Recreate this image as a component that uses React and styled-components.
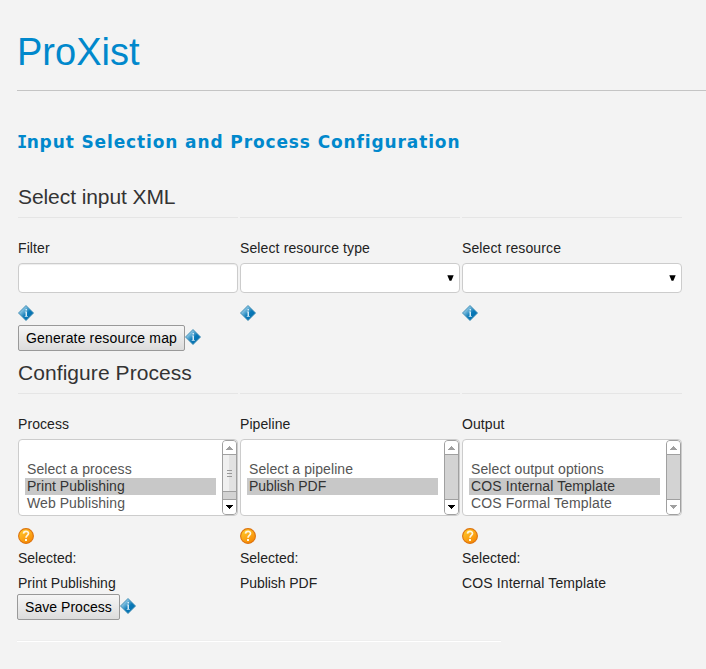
import React from "react";
import styled, { createGlobalStyle } from "styled-components";

const GlobalStyle = createGlobalStyle`
  * { box-sizing: border-box; }
  body {
    margin: 0;
    background: #f3f3f3;
    color: #222;
    font: 14px/20px "Liberation Sans", Arial, sans-serif;
    overflow: hidden;
  }
`;

const Page = styled.main`
  height: 669px;
  padding-left: 17px;
  display: flex;
  flex-direction: column;
  white-space: nowrap;
`;

const Header = styled.header`
  height: 91px;
  flex: none;
  padding-top: 32px;
  border-bottom: 1px solid #c4c4c4;
`;

const Title = styled.h1`
  margin: 0;
  font-size: 38px;
  font-weight: 400;
  line-height: 40px;
  color: #08c;
`;

const Subtitle = styled.h2`
  margin: 41px 0 0;
  height: 20px;
  font: bold 17px/20px "DejaVu Sans", Verdana, sans-serif;
  letter-spacing: 0.88px;
  color: #08c;

  &::first-letter {
    font-family: "DejaVu Sans Mono", monospace;
    letter-spacing: -0.6px;
  }
`;

const Section = styled.section`
  margin-left: 1px;
  margin-top: ${(p) => p.$top}px;
`;

const SectionTitle = styled.h3`
  margin: 0;
  height: 31px;
  font-size: 21px;
  font-weight: 400;
  line-height: 22px;
  letter-spacing: ${(p) => p.$track || 0}px;
  color: #333;
`;

const Columns = styled.div`
  display: grid;
  grid-template-columns: repeat(3, 220px);
  gap: 2px;
`;

const Field = styled.div`
  display: flex;
  flex-direction: column;
  align-items: flex-start;
  border-top: 1px solid #e5e5e5;
`;

const Label = styled.label`
  margin: 20px 0 5px;
  height: 20px;
  letter-spacing: ${(p) => p.$track || 0}px;
`;

const Control = styled.div`
  width: 220px;
  height: 30px;
  border: 1px solid #ccc;
  border-radius: 4px;
  background: #fff;
  display: flex;
  align-items: center;
  justify-content: flex-end;
  padding-right: 5px;
  box-shadow: ${(p) => (p.$inset ? "inset 0 1px 1px rgba(0,0,0,.075)" : "none")};
`;

const ListBox = styled.div`
  width: 220px;
  height: 77px;
  border: 1px solid #ccc;
  border-radius: 4px;
  background: #fff;
  display: flex;
`;

const Options = styled.div`
  flex: 1;
  padding: 4px 6px 0;
`;

const Option = styled.div`
  height: 17px;
  padding-left: 2px;
  line-height: 17px;
  letter-spacing: ${(p) => p.$track || 0}px;
  color: ${(p) => (p.$selected ? "#333" : "#555")};
  background: ${(p) => (p.$selected ? "#c8c8c8" : "transparent")};
`;

const Scrollbar = styled.div`
  width: 15px;
  height: 75px;
  border: 1px solid #a0a0a0;
  border-radius: 4px;
  background: #d3d3d3;
  overflow: hidden;
  display: flex;
  flex-direction: column;
`;

const Arrow = styled.div`
  height: ${(p) => (p.$down ? 15 : 14)}px;
  flex: none;
  display: flex;
  align-items: center;
  justify-content: center;
  background: #fff;
  border-bottom: ${(p) => (p.$down ? "0" : "1px solid #a0a0a0")};
  border-top: ${(p) => (p.$down ? "1px solid #a0a0a0" : "0")};
`;

const Track = styled.div`
  flex: 1;
`;

const Thumb = styled.div`
  height: 37px;
  border-bottom: 1px solid #a0a0a0;
  background: linear-gradient(90deg, #f0f0f0 50%, #e2e2e2 50%);
  display: flex;
  flex-direction: column;
  align-items: center;
  justify-content: center;
  gap: 2px;
`;

const Grip = styled.span`
  width: 5px;
  height: 1px;
  background: #999;
`;

const IconSlot = styled.div`
  height: 16px;
  margin-top: 12px;
`;

const Status = styled.p`
  margin: ${(p) => p.$top}px 0 0;
  letter-spacing: ${(p) => p.$track || 0}px;
`;

const Actions = styled.div`
  display: flex;
  margin-top: ${(p) => p.$top}px;
  margin-left: ${(p) => p.$left || 0}px;
  height: 26px;
`;

const Button = styled.button`
  width: ${(p) => p.$width}px;
  height: 26px;
  margin: 0;
  padding: 0 0 0 7px;
  text-align: left;
  border: 1px solid #999;
  border-radius: 2px;
  background: linear-gradient(#f6f6f6, #dcdcdc);
  color: #000;
  font: inherit;
  letter-spacing: ${(p) => p.$track || 0}px;
`;

const ActionIcon = styled.span`
  height: 16px;
  margin-top: 4px;
`;

const Footer = styled.hr`
  width: 484px;
  height: 2px;
  margin: 20px 0 0;
  border: 0;
  border-top: 1px solid #eee;
  border-bottom: 1px solid #fff;
`;

const Svg = styled.svg`
  display: block;
`;

const InfoIcon = () => (
  <Svg width="16" height="16" viewBox="0 0 16 16">
    <defs>
      <linearGradient id="info" x1="0" y1="0" x2="1" y2="1">
        <stop offset="0.22" stopColor="#9bd0ea" />
        <stop offset="0.5" stopColor="#2488bf" />
        <stop offset="0.56" stopColor="#0878b8" />
        <stop offset="0.85" stopColor="#0670ad" />
      </linearGradient>
    </defs>
    <path d="M8 .5 15.5 8 8 15.5.5 8Z" fill="url(#info)" stroke="#3989b1" strokeWidth=".9" />
    <path d="M7.5 4H9v1.4H7.5zM6.8 6.5H9V11h.8v.8H6.7V11h.8V7.3h-.7z" fill="#d5ebf6" />
  </Svg>
);

const HelpIcon = () => (
  <Svg width="16" height="16" viewBox="0 0 16 16">
    <defs>
      <linearGradient id="help" x1="0" y1="0" x2="0.6" y2="1">
        <stop offset="0" stopColor="#ffd52c" />
        <stop offset="0.5" stopColor="#fcae1b" />
        <stop offset="1" stopColor="#f78b05" />
      </linearGradient>
    </defs>
    <circle cx="8" cy="8" r="7.4" fill="url(#help)" stroke="#dd7310" strokeWidth="1.1" />
    <path d="M5.5 5.6C5.6 2.6 10.5 2.6 10.5 5.4 10.5 7.4 8 7.4 8 9.8" fill="none" stroke="#fff6e0" strokeWidth="1.7" />
    <path d="M7 11h2v2H7z" fill="#fff6e0" />
  </Svg>
);

const Caret = () => (
  <Svg width="7" height="7" viewBox="0 0 7 7">
    <path d="M.3.3h6.4L4.4 5.8H2.6z" fill="#000" />
  </Svg>
);

const Pointer = ({ down, color }) => (
  <Svg width="7" height="4" viewBox="0 0 7 4" shapeRendering="crispEdges">
    <path d={down ? "M0 0h7v1H6v1H5v1H4v1H3V3H2V2H1V1H0z" : "M3 0h1v1h1v1h1v1h1v1H0V3h1V2h1V1h1z"} fill={color} />
  </Svg>
);

const inputs = [
  { label: "Filter", track: 0.1 },
  { label: "Select resource type", track: 0.12, select: true },
  { label: "Select resource", track: 0.12, select: true },
];

const lists = [
  {
    label: "Process",
    options: [
      { text: "Select a process", track: 0.08 },
      { text: "Print Publishing", track: 0.03 },
      { text: "Web Publishing", track: 0.07 },
    ],
    thumb: true,
    down: true,
  },
  {
    label: "Pipeline",
    options: [
      { text: "Select a pipeline", track: 0.08 },
      { text: "Publish PDF", track: -0.06 },
    ],
    down: true,
  },
  {
    label: "Output",
    options: [
      { text: "Select output options", track: 0.1 },
      { text: "COS Internal Template", track: 0.13 },
      { text: "COS Formal Template", track: 0.14 },
    ],
  },
];

export default function App() {
  return (
    <Page>
      <GlobalStyle />
      <Header>
        <Title>ProXist</Title>
      </Header>
      <Subtitle>Input Selection and Process Configuration</Subtitle>
      <Section $top={34}>
        <SectionTitle $track={-0.08}>Select input XML</SectionTitle>
        <Columns>
          {inputs.map((f) => (
            <Field key={f.label}>
              <Label $track={f.track}>{f.label}</Label>
              <Control $inset={!f.select}>{f.select && <Caret />}</Control>
              <IconSlot><InfoIcon /></IconSlot>
            </Field>
          ))}
        </Columns>
        <Actions $top={4}>
          <Button $width={167} $track={0.15}>Generate resource map</Button>
          <ActionIcon><InfoIcon /></ActionIcon>
        </Actions>
      </Section>
      <Section $top={11}>
        <SectionTitle $track={0.07}>Configure Process</SectionTitle>
        <Columns>
          {lists.map((l) => (
            <Field key={l.label}>
              <Label $track={0.07}>{l.label}</Label>
              <ListBox>
                <Options>
                  <Option />
                  {l.options.map((o, i) => (
                    <Option key={o.text} $selected={i === 1} $track={o.track}>{o.text}</Option>
                  ))}
                </Options>
                <Scrollbar>
                  <Arrow><Pointer color="#a0a0a0" /></Arrow>
                  <Track>
                    {l.thumb && <Thumb><Grip /><Grip /><Grip /></Thumb>}
                  </Track>
                  <Arrow $down><Pointer down color={l.down ? "#000" : "#a0a0a0"} /></Arrow>
                </Scrollbar>
              </ListBox>
              <IconSlot><HelpIcon /></IconSlot>
              <Status $top={4}>Selected:</Status>
              <Status $top={5} $track={l.options[1].track}>{l.options[1].text}</Status>
            </Field>
          ))}
        </Columns>
        <Actions $top={1} $left={-1}>
          <Button $width={103} $track={0.04}>Save Process</Button>
          <ActionIcon><InfoIcon /></ActionIcon>
        </Actions>
      </Section>
      <Footer />
    </Page>
  );
}
